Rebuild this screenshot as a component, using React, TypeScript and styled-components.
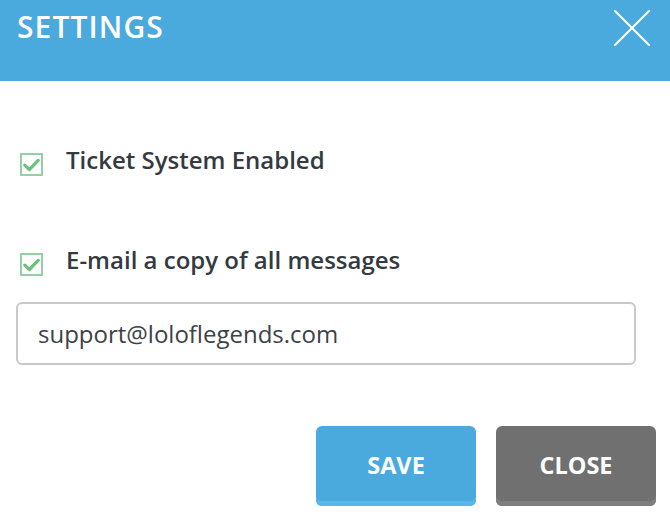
import React, { useState } from 'react';
import styled, { createGlobalStyle } from 'styled-components';

const GlobalStyle = createGlobalStyle`
  html, body {
    margin: 0;
    padding: 0;
    background: #ffffff;
    font-family: 'Open Sans', 'Noto Sans', sans-serif;
  }
`;

const Dialog = styled.div`
  width: 670px;
  height: 520px;
  background: #ffffff;
  display: flex;
  flex-direction: column;
  overflow: hidden;
`;

const Header = styled.header`
  height: 81px;
  flex-shrink: 0;
  background: #4aa9dd;
  display: flex;
  align-items: flex-start;
  justify-content: space-between;
  padding: 0 20px 0 17px;
  box-sizing: border-box;
`;

const Title = styled.h1`
  margin: 8px 0 0;
  color: #ffffff;
  font-size: 30px;
  font-weight: 600;
  letter-spacing: 1.1px;
  line-height: 38px;
`;

const CloseIcon = styled.button`
  margin-top: 10px;
  width: 36px;
  height: 36px;
  padding: 0;
  border: none;
  background: none;
  cursor: pointer;
  display: block;
`;

const Body = styled.div`
  display: flex;
  flex-direction: column;
  padding: 64px 34px 0 16px;
`;

const CheckRow = styled.label<{ gap?: number }>`
  display: flex;
  align-items: flex-start;
  gap: 23px;
  padding-left: 4px;
  margin-bottom: ${props => props.gap ?? 0}px;
  color: #343a40;
  font-size: 24px;
  font-weight: 600;
  line-height: 30px;
  cursor: pointer;
`;

const Box = styled.span`
  margin-top: 8px;
  width: 23px;
  height: 23px;
  box-sizing: border-box;
  border: 2px solid #92d1a4;
  display: flex;
  align-items: center;
  justify-content: center;
  flex-shrink: 0;
`;

const EmailInput = styled.input`
  margin-top: 26px;
  height: 63px;
  box-sizing: border-box;
  border: 2px solid #c9c9c9;
  border-radius: 6px;
  padding: 0 20px;
  font-family: 'Open Sans', 'Noto Sans', sans-serif;
  font-size: 24px;
  color: #3e4246;
  outline: none;
`;

const Footer = styled.div`
  display: flex;
  justify-content: flex-end;
  gap: 20px;
  padding: 61px 14px 0 0;
`;

const Button = styled.button<{ tone: 'blue' | 'gray' }>`
  width: 160px;
  height: 80px;
  border: none;
  border-radius: 6px;
  background: ${props => (props.tone === 'blue' ? '#4aa9dd' : '#6f706f')};
  box-shadow: inset 0 -5px 0 ${props => (props.tone === 'blue' ? '#58b7e9' : '#7d7e7d')};
  color: #ffffff;
  font-family: 'Open Sans', 'Noto Sans', sans-serif;
  font-size: 23.5px;
  font-weight: 700;
  padding: 0 0 2px;
  cursor: pointer;
`;

const Check = () => (
  <svg width="17" height="14" viewBox="0 0 17 14">
    <path d="M1.8 7.2 L6.3 11.6 L15.2 2.4" fill="none" stroke="#6bc07e" strokeWidth="3.2" strokeLinecap="round" strokeLinejoin="round" />
  </svg>
);

export default function App() {
  const [email, setEmail] = useState('support@loloflegends.com');
  return (
    <>
      <GlobalStyle />
      <Dialog>
        <Header>
          <Title>SETTINGS</Title>
          <CloseIcon aria-label="Close">
            <svg width="36" height="36" viewBox="0 0 36 36">
              <path d="M1 1 L35 35 M35 1 L1 35" stroke="#ffffff" strokeWidth="2" strokeLinecap="round" />
            </svg>
          </CloseIcon>
        </Header>
        <Body>
          <CheckRow gap={69}>
            <Box><Check /></Box>
            Ticket System Enabled
          </CheckRow>
          <CheckRow>
            <Box><Check /></Box>
            E-mail a copy of all messages
          </CheckRow>
          <EmailInput value={email} onChange={e => setEmail(e.target.value)} />
        </Body>
        <Footer>
          <Button tone="blue">SAVE</Button>
          <Button tone="gray">CLOSE</Button>
        </Footer>
      </Dialog>
    </>
  );
}
